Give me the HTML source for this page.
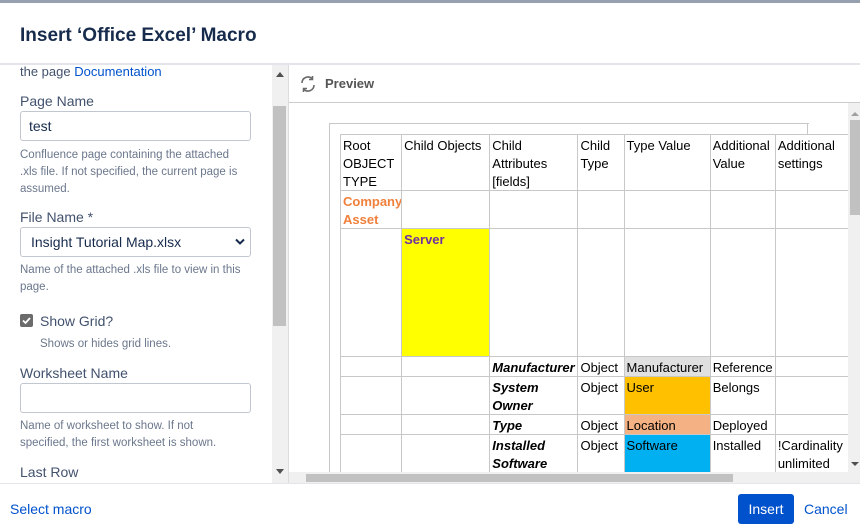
<!DOCTYPE html>
<html><head><meta charset="utf-8"><style>
*{margin:0;padding:0;box-sizing:border-box}
body{width:860px;height:531px;overflow:hidden;background:#fff;font-family:"Liberation Sans",sans-serif;position:relative;color:#172b4d}
.a{position:absolute}
.lbl{font-size:14px;color:#42526e;left:20px}
.help{font-size:11.5px;color:#6b778c;line-height:17px;left:20px;width:228px}
.inp{left:20px;width:231px;height:30px;border:1px solid #c1c7d0;border-radius:3px;font-size:14px;padding:6px 8px;color:#172b4d}
table{border-collapse:collapse;font-size:13px;color:#000;table-layout:fixed}
td{border:1px solid #c8c8c8;vertical-align:top;padding:0 2px;line-height:18px;overflow:hidden;white-space:nowrap}
td span{position:relative;top:2px;display:block}
.bi{font-weight:bold;font-style:italic}
</style></head><body>
<div class="a" style="left:0;top:0;width:860px;height:3px;background:#97a0af"></div>
<div class="a" style="left:20px;top:25px;font-size:19px;font-weight:bold;color:#172b4d">Insert ‘Office Excel’ Macro</div>
<div class="a" style="left:0;top:63px;width:860px;height:2px;background:#e4e5ea"></div>

<div class="a" style="left:0;top:65px;width:272px;height:418px;overflow:hidden">
<div class="a" style="left:20px;top:-1px;font-size:13px;color:#42526e">the page <span style="color:#0052cc">Documentation</span></div>
<div class="a lbl" style="top:28px">Page Name</div>
<div class="a inp" style="top:46px">test</div>
<div class="a help" style="top:82px">Confluence page containing the attached .xls file. If not specified, the current page is assumed.</div>
<div class="a lbl" style="top:144px">File Name *</div>
<div class="a inp" style="top:162px;padding-left:10px">Insight Tutorial Map.xlsx<svg style="position:absolute;right:5px;top:10px" width="10" height="8" viewBox="0 0 10 8"><path d="M1 1.5 5 5.5 9 1.5" stroke="#172b4d" stroke-width="2" fill="none"/></svg></div>
<div class="a help" style="top:197px">Name of the attached .xls file to view in this page.</div>
<div class="a" style="left:20px;top:249px;width:13px;height:13px;background:#6b6b6b;border-radius:2px"><svg width="13" height="13" viewBox="0 0 13 13"><path d="M3 6.5 5.5 9 10 4" stroke="#fff" stroke-width="1.8" fill="none"/></svg></div>
<div class="a" style="left:40px;top:248px;font-size:14px;color:#42526e">Show Grid?</div>
<div class="a help" style="left:40px;top:271px">Shows or hides grid lines.</div>
<div class="a lbl" style="top:300px">Worksheet Name</div>
<div class="a inp" style="top:318px"></div>
<div class="a help" style="top:353px;width:205px">Name of worksheet to show. If not specified, the first worksheet is shown.</div>
<div class="a lbl" style="top:399px">Last Row</div>
</div>
<div class="a" style="left:272px;top:65px;width:16px;height:418px;background:#f0f0f0"></div>
<div class="a" style="left:273px;top:106px;width:13px;height:220px;background:#c1c1c1"></div>
<div class="a" style="left:276px;top:72px;width:0;height:0;border-left:4px solid transparent;border-right:4px solid transparent;border-bottom:5px solid #505050"></div>
<div class="a" style="left:276px;top:469px;width:0;height:0;border-left:4px solid transparent;border-right:4px solid transparent;border-top:5px solid #505050"></div>
<div class="a" style="left:288px;top:65px;width:1px;height:418px;background:#dcdcdc"></div>

<svg class="a" style="left:299px;top:75px" width="18" height="18" viewBox="0 0 18 18"><path d="M3 8a6 6 0 0 1 10-4.5M15 10a6 6 0 0 1-10 4.5" stroke="#6b6b6b" stroke-width="1.6" fill="none"/><path d="M13.5 1v3.5H10M4.5 17v-3.5H8" stroke="#6b6b6b" stroke-width="1.6" fill="none"/></svg>
<div class="a" style="left:325px;top:76px;font-size:13px;font-weight:bold;color:#555">Preview</div>
<div class="a" style="left:289px;top:102px;width:571px;height:1px;background:#ccc"></div>

<div class="a" style="left:289px;top:103px;width:559px;height:369px;overflow:hidden">
<div class="a" style="left:40px;top:20px;width:480px;height:400px;border-top:1px solid #c8c8c8;border-left:1px solid #c8c8c8"></div>
<div class="a" style="left:518px;top:20px;width:1px;height:11px;background:#c8c8c8"></div>
<table class="a" style="left:51px;top:31px;width:510px">
<colgroup><col style="width:61px"><col style="width:88px"><col style="width:88px"><col style="width:46px"><col style="width:86px"><col style="width:65px"><col style="width:74px"></colgroup>
<tr style="height:56px"><td><span>Root<br>OBJECT<br>TYPE</span></td><td><span>Child Objects</span></td><td><span>Child<br>Attributes<br>[fields]</span></td><td><span>Child<br>Type</span></td><td><span>Type Value</span></td><td><span>Additional<br>Value</span></td><td><span>Additional<br>settings</span></td></tr>
<tr style="height:38px"><td style="color:#f0803c;font-weight:bold"><span>Company<br>Asset</span></td><td></td><td></td><td></td><td></td><td></td><td></td></tr>
<tr style="height:128px"><td></td><td style="background:#ffff00;color:#7030a0;font-weight:bold"><span>Server</span></td><td></td><td></td><td></td><td></td><td></td></tr>
<tr style="height:20px"><td></td><td></td><td class="bi"><span>Manufacturer</span></td><td><span>Object</span></td><td style="background:#e0e0e0"><span>Manufacturer</span></td><td><span>Reference</span></td><td></td></tr>
<tr style="height:38px"><td></td><td></td><td class="bi"><span>System<br>Owner</span></td><td><span>Object</span></td><td style="background:#ffc000"><span>User</span></td><td><span>Belongs</span></td><td></td></tr>
<tr style="height:20px"><td></td><td></td><td class="bi"><span>Type</span></td><td><span>Object</span></td><td style="background:#f4b183"><span>Location</span></td><td><span>Deployed</span></td><td></td></tr>
<tr style="height:38px"><td></td><td></td><td class="bi"><span>Installed<br>Software</span></td><td><span>Object</span></td><td style="background:#00b0f0"><span>Software</span></td><td><span>Installed</span></td><td><span>!Cardinality<br>unlimited</span></td></tr>
</table>
</div>
<div class="a" style="left:848px;top:103px;width:12px;height:369px;background:#f0f0f0"></div>
<div class="a" style="left:850px;top:120px;width:10px;height:95px;background:#c1c1c1"></div>
<div class="a" style="left:851px;top:112px;border-left:4px solid transparent;border-right:4px solid transparent;border-bottom:4px solid #a0a0a0"></div>
<div class="a" style="left:851px;top:462px;border-left:4px solid transparent;border-right:4px solid transparent;border-top:4px solid #505050"></div>
<div class="a" style="left:289px;top:472px;width:571px;height:11px;background:#f0f0f0"></div>
<div class="a" style="left:306px;top:474px;width:427px;height:8px;background:#c1c1c1"></div>

<div class="a" style="left:0;top:483px;width:860px;height:1px;background:#e4e5ea"></div>
<div class="a" style="left:10px;top:501px;font-size:14px;color:#0052cc">Select macro</div>
<div class="a" style="left:738px;top:494px;width:56px;height:30px;background:#0052cc;border-radius:3px;color:#fff;font-size:14px;text-align:center;line-height:30px">Insert</div>
<div class="a" style="left:804px;top:501px;font-size:14px;color:#0052cc">Cancel</div>
</body></html>
